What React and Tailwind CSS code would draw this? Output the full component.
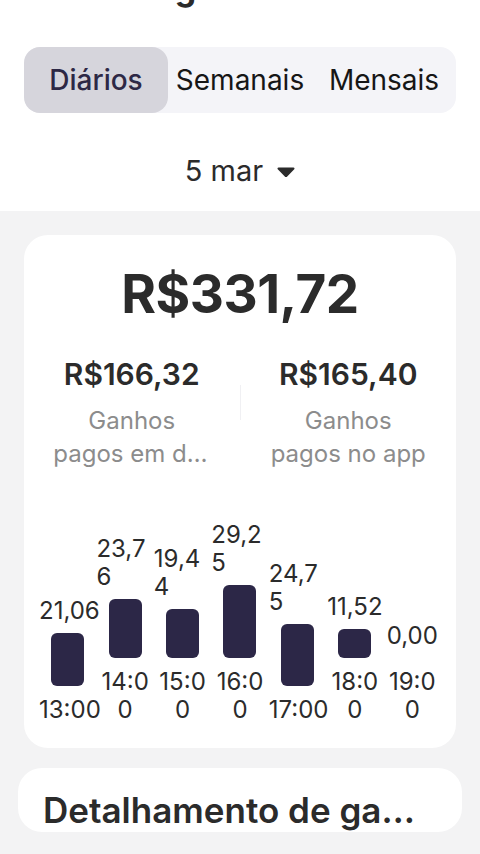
import React from 'react';

// hourly earnings shown in the chart
const hours = [
  { value: ['21,06'], amount: 21.06, time: ['13:00'] },
  { value: ['23,7', '6'], amount: 23.76, time: ['14:0', '0'] },
  { value: ['19,4', '4'], amount: 19.44, time: ['15:0', '0'] },
  { value: ['29,2', '5'], amount: 29.25, time: ['16:0', '0'] },
  { value: ['24,7', '5'], amount: 24.75, time: ['17:00'] },
  { value: ['11,52'], amount: 11.52, time: ['18:0', '0'] },
  { value: ['0,00'], amount: 0, time: ['19:0', '0'] },
];

const tabs = ['Diários', 'Semanais', 'Mensais'];

function Caret() {
  return (
    <svg width="18" height="10" viewBox="0 0 18 10" className="ml-[14px] mt-[2px]">
      <path d="M1.5 0.5h15a1 1 0 0 1 .75 1.66l-7.5 7.8a1 1 0 0 1-1.5 0l-7.5-7.8A1 1 0 0 1 1.5.5z" fill="#2b2b2b" />
    </svg>
  );
}

function Column({ item }) {
  const wrapped = item.value.length > 1;
  return (
    <div className="flex flex-col items-center">
      <div className={`w-full text-[24px] leading-[28px] ${wrapped ? 'text-left' : 'text-center'}`}>
        {item.value.map((line, i) => (
          <div key={i} className="whitespace-nowrap">{line}</div>
        ))}
      </div>
      <div
        className="mt-2 w-[33px] rounded-[6px] bg-[#2c2747]"
        style={{ height: `${Math.round(item.amount * 2.5)}px` }}
      />
      <div className="mt-[10px] w-full text-center text-[24px] leading-[28px]">
        {item.time.map((line, i) => (
          <div key={i} className="whitespace-nowrap">{line}</div>
        ))}
      </div>
    </div>
  );
}

export default function App() {
  return (
    <div className="h-[854px] w-[480px] overflow-hidden bg-[#f3f3f4] font-['Inter','Noto_Sans',sans-serif] text-[#2b2b2b]">
      {/* Header */}
      <div className="bg-white pb-[22px]">
        <h1 className="-mt-[32px] h-[40px] pl-[84px] text-left text-[34px] font-bold leading-[40px] text-[#2b2b2b]">
          Seus ganhos
        </h1>
        <div className="mx-6 mt-[39px] flex h-[66px] rounded-2xl bg-[#f4f4f8]">
          {tabs.map((tab, i) => (
            <div
              key={tab}
              className={`flex flex-1 items-center justify-center rounded-2xl text-[28px] ${
                i === 0 ? 'bg-[#d6d5dc] font-medium text-[#2d2845]' : 'text-[#161616]'
              }`}
            >
              {tab}
            </div>
          ))}
        </div>
        <div className="mt-[40px] flex h-[36px] items-center justify-center text-[29px] leading-[36px] text-[#2b2b2b]">
          <span>5 mar</span>
          <Caret />
        </div>
      </div>

      {/* Summary card */}
      <div className="px-6 pt-6">
        <div className="rounded-[24px] bg-white pb-6 pt-[27px]">
          <div className="text-center text-[53px] font-bold leading-[64px] tracking-[-0.5px]">R$331,72</div>

          <div className="mt-[30px] flex items-start">
            <div className="flex flex-1 flex-col items-center">
              <div className="text-[30px] font-semibold leading-[36px]">R$166,32</div>
              <div className="mt-3 flex flex-col items-center text-[24px] leading-[33px] text-[#8c8c8c]">
                <div>Ganhos</div>
                <div className="w-[157px] truncate text-center">pagos em dinheiro</div>
              </div>
            </div>
            <div className="mt-[29px] h-[35px] w-px bg-[#f0f0f3]" />
            <div className="flex flex-1 flex-col items-center">
              <div className="text-[30px] font-semibold leading-[36px]">R$165,40</div>
              <div className="mt-3 text-center text-[24px] leading-[33px] text-[#8c8c8c]">
                <div>Ganhos</div>
                <div>pagos no app</div>
              </div>
            </div>
          </div>

          <div className="mt-[51px] grid grid-cols-7 items-end px-[15px]">
            {hours.map((h) => (
              <Column key={h.time.join('')} item={h} />
            ))}
          </div>
        </div>
      </div>

      {/* Breakdown card */}
      <div className="mx-[18px] mt-5 rounded-[24px] bg-white px-[25px] pt-[20px]">
        <h2 className="w-[380px] truncate text-[35px] font-semibold leading-[44px]">Detalhamento de ganhos</h2>
      </div>
    </div>
  );
}
